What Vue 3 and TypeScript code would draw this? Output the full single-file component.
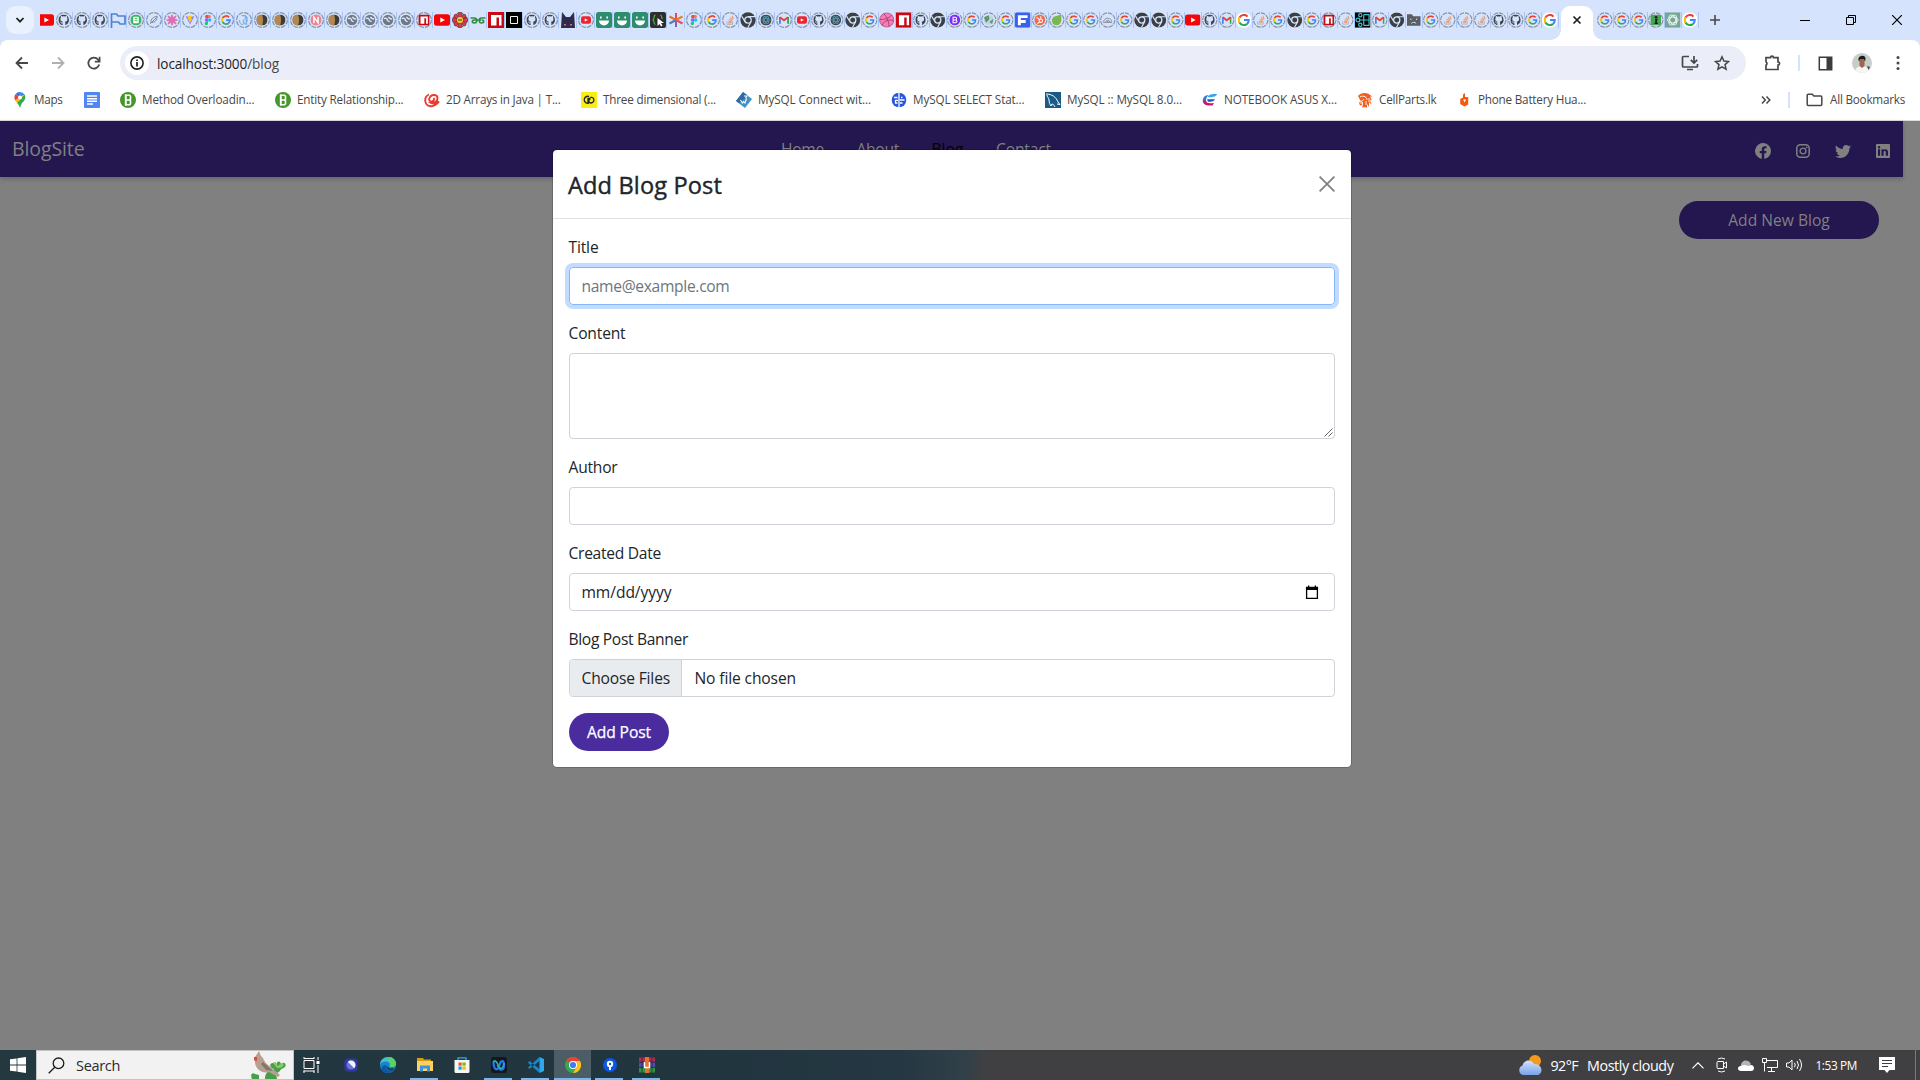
<script setup lang="ts">
interface Tab { icon: string; ring: boolean; pad: number; size: number }
interface Bookmark { icon: string; label: string; width: number; text: number }

// These icons fill most of their ring; the others keep a wider margin.
const bigInRing = ['gh', 'moon', 'globe', 'react', 'nred', 'npm', 'hub', 'flower', 'ever', 'boot', 'leaf', 'person', 'earth']

// A trailing "*" marks a suspended tab, whose icon is drawn inside a dashed ring.
const parse = (list: string): Tab[] =>
  list.trim().split(/\s+/).map((n) => {
    const icon = n.replace('*', '')
    const ring = n.endsWith('*')
    const pad = !ring ? 0 : bigInRing.includes(icon) ? 2.4 : 3
    return { icon, ring, pad, size: 16 - pad * 2 }
  })

const wideTabs = parse(`gh* gh* gh* flag ever* feather* flower* vite* figma* goog* doc* moon* moon* moon* nred* moon*
  globe* globe* globe* globe* npm* yt bloom gfg npm block gh* gh* cat ytr* smile smile smile cursor aster figma* goog*
  so* chrome react* gmail* ytr*`)
const slimTabs = parse(`gh* react* chrome goog* drib npm gh* chrome boot* goog* earth* goog* fblue hub* leaf* goog*
  goog* speed* goog* chrome chrome goog* yt gh* gmail* googw so* goog* chrome goog* npm* so* cyan gmail* chrome sad
  goog* so* so* so* gh* gh* goog* googw`)
const lastTabs = parse('goog* goog* goog* person* gpt googw')

const bookmarks: Bookmark[] = [
  { icon: 'maps', label: 'Maps', width: 52, text: 28.5 },
  { icon: 'docs', label: '', width: 16, text: 0 },
  { icon: 'bbc', label: 'Method Overloadin...', width: 135, text: 112.5 },
  { icon: 'bbc', label: 'Entity Relationship...', width: 129, text: 106.5 },
  { icon: 'edu', label: '2D Arrays in Java | T...', width: 137, text: 114.5 },
  { icon: 'cp', label: 'Three dimensional (...', width: 135, text: 113 },
  { icon: 'w3', label: 'MySQL Connect wit...', width: 135, text: 113 },
  { icon: 'g4', label: 'MySQL SELECT Stat...', width: 134, text: 111.5 },
  { icon: 'mysql', label: 'MySQL :: MySQL 8.0...', width: 137, text: 115 },
  { icon: 'cf', label: 'NOTEBOOK ASUS X...', width: 135, text: 113 },
  { icon: 'cell', label: 'CellParts.lk', width: 79, text: 57.5 },
  { icon: 'phone', label: 'Phone Battery Hua...', width: 135, text: 108 },
]

const apps = [
  { icon: 'orb', open: false, active: false },
  { icon: 'edge', open: false, active: false },
  { icon: 'explorer', open: true, active: false },
  { icon: 'store', open: false, active: false },
  { icon: 'webex', open: true, active: false },
  { icon: 'vscode', open: true, active: false },
  { icon: 'chromec', open: true, active: true },
  { icon: 'pin', open: true, active: false },
  { icon: 'rar', open: true, active: false },
]

// Spreads or tightens the letters so the text takes the given width in pixels.
const vFit = {
  mounted(el: HTMLElement, binding: { value: number }) {
    const n = (el.textContent ?? '').trim().length
    if (!n || !binding.value) return
    const natural = el.getBoundingClientRect().width
    el.style.letterSpacing = `${(binding.value - natural) / n}px`
  },
}
</script>

<template>
  <div class="screen">
    <svg class="defs" width="0" height="0" aria-hidden="true">
      <symbol id="i-gh" viewBox="0 0 16 16"><path fill="#3d444d" d="M8 0C3.58 0 0 3.58 0 8c0 3.54 2.29 6.53 5.47 7.59.4.07.55-.17.55-.38v-2.4c-2.01.4-2.6-.5-2.7-1-.1-.3-.5-1-.9-1.200-.3-.2-.7-.6 0-.6.6 0 1.100.6 1.200.8.7 1.200 1.900.9 2.300.7.1-.5.3-.9.5-1.100-1.800-.2-3.600-.9-3.600-3.900 0-.9.3-1.600.8-2.200-.1-.2-.4-1 .1-2.100 0 0 .7-.2 2.200.8a7.600 7.600 0 0 1 4 0c1.500-1 2.200-.8 2.200-.8.4 1.100.2 1.900.1 2.100.5.6.8 1.300.8 2.200 0 3.100-1.900 3.700-3.700 3.900.3.3.6.7.6 1.500v2.900c0 .2.1.5.5.4A8 8 0 0 0 8 0z"/></symbol>
      <symbol id="i-flag" viewBox="0 0 16 16"><path d="M1.500 16V2h5l1.500 2h7v8h-5L8.500 10h-7" fill="none" stroke="#4c82d6" stroke-width="1.700"/></symbol>
      <symbol id="i-ever" viewBox="0 0 16 16"><circle cx="8" cy="8" r="8" fill="#35b95e"/><rect x="4" y="3.500" width="8" height="9" rx="1" fill="#fff"/><path d="M6 6h4M6 8.500h4" stroke="#35b95e" stroke-width="1.300"/></symbol>
      <symbol id="i-feather" viewBox="0 0 16 16"><path d="M2 14 12 4M3 12C3 6 7 3 13 2c0 6-3 10-9 10z" fill="none" stroke="#76808f" stroke-width="1.500"/></symbol>
      <symbol id="i-flower" viewBox="0 0 16 16"><g stroke="#e36bb0" stroke-width="2.500"><path d="M8 0v16M0 8h16M2.300 2.300l11.400 11.400M13.700 2.300 2.300 13.700"/></g><circle cx="8" cy="8" r="5" fill="#dd6fb2"/></symbol>
      <symbol id="i-vite" viewBox="0 0 16 16"><path d="M1 2l7 13 7-13-7 1.200z" fill="#8f7bf5"/><path d="M11 1 4.500 2l-.5 6 2.300-.4L7 13l5-7-2 .2z" fill="#ffc61c"/></symbol>
      <symbol id="i-figma" viewBox="0 0 16 16"><path d="M8 0H5.500a2.700 2.700 0 0 0 0 5.300H8z" fill="#f24e1e"/><path d="M8 0h2.500a2.700 2.700 0 0 1 0 5.300H8z" fill="#ff7262"/><path d="M8 5.300H5.500a2.700 2.700 0 0 0 0 5.400H8z" fill="#a259ff"/><circle cx="10.600" cy="8" r="2.700" fill="#1abcfe"/><path d="M8 10.700H5.500A2.700 2.700 0 1 0 8 13.300z" fill="#0acf83"/></symbol>
      <symbol id="i-goog" viewBox="0 0 16 16"><g fill="none" stroke-width="2.800"><path d="M12.800 3.700A6.300 6.300 0 0 0 2.600 4.800" stroke="#ea4335"/><path d="M2.600 4.700a6.300 6.300 0 0 0 0 6.600" stroke="#fbbc05"/><path d="M2.600 11.200a6.300 6.300 0 0 0 9.400 2" stroke="#34a853"/><path d="M11.900 13.200C13.700 11.900 14.300 10 14.300 8H8.200" stroke="#4285f4"/></g></symbol>
      <symbol id="i-googw" viewBox="0 0 16 16"><circle cx="8" cy="8" r="8" fill="#fff"/><use href="#i-goog" x="1.500" y="1.500" width="13" height="13"/></symbol>
      <symbol id="i-doc" viewBox="0 0 16 16"><path d="M4 1h6l3 3v7M10 1v4h3M1 8a7 7 0 0 0 12 6M7 8h5v5H7z" fill="none" stroke="#78afe8" stroke-width="1.700"/></symbol>
      <symbol id="i-moon" viewBox="0 0 16 16"><circle cx="8" cy="8" r="8" fill="#3e3c3b"/><path d="M8 0a8 8 0 0 0 0 16c2-5 2-11 0-16z" fill="#b48750"/></symbol>
      <symbol id="i-nred" viewBox="0 0 16 16"><circle cx="8" cy="8" r="8" fill="#f0808d"/><path d="M5 12.500V4l6 8V3.500" fill="none" stroke="#fff" stroke-width="2"/></symbol>
      <symbol id="i-globe" viewBox="0 0 16 16"><circle cx="8" cy="8" r="7.500" fill="#6f7885"/><path d="M2 6c3-1 5 0 5 2s3 1 3 3M9 3.500c0 2 2 3 5 3" fill="none" stroke="#d5e3fd" stroke-width="2"/></symbol>
      <symbol id="i-npm" viewBox="0 0 16 16"><path d="M0 0h16v16H0z" fill="#c90813"/><path d="M3 3h10.500v10.500H11V5.500H8.500v8H3z" fill="#fff"/></symbol>
      <symbol id="i-yt" viewBox="0 0 16 16"><rect y="2.300" width="16" height="11.400" rx="2.500" fill="#f40606"/><path d="M6.300 5.500v5L11 8z" fill="#fff"/></symbol>
      <symbol id="i-ytr" viewBox="0 0 16 16"><rect y="2" width="16" height="12" rx="3.500" fill="#ec2430"/><path d="M6 5.500v5L11 8z" fill="#fff"/></symbol>
      <symbol id="i-bloom" viewBox="0 0 16 16"><g fill="#e33a45" stroke="#46151e" stroke-width=".6"><path d="M8 8 5.500 1 8 .3l2.500.7zM8 8l3.500-6 2 .8.700 2.400zM8 8l7-2.500.7 2.500-.7 2.500zM8 8l6.200 3.300-.7 2.200-2 .6zM8 8l2.500 7-2.500.7-2.500-.7zM8 8l-3.500 6.200-2-.7-.7-2.200zM8 8l-7 2.500L.3 8 1 5.500zM8 8 1.800 5l.7-2.300 2-.7z"/></g><circle cx="8" cy="8" r="3" fill="#f4d33a"/><path d="M6 8h4" stroke="#43221f"/></symbol>
      <symbol id="i-gfg" viewBox="0 0 16 16"><path d="M.5 6h4c3 0 3 5 0 5s-3-3 0-3h6.500M15.500 6h-4c-3 0-3 5 0 5s3-3 0-3" fill="none" stroke="#328a45" stroke-width="1.500"/></symbol>
      <symbol id="i-block" viewBox="0 0 16 16"><path d="M0 0h16v16H0z"/><path d="M4.500 4.500h7v7h-7z" fill="none" stroke="#f2f2f2"/></symbol>
      <symbol id="i-cat" viewBox="0 0 16 16"><path d="M1 16 2 0l4 5h4l4-5 1 16z" fill="#2f2b50"/><path d="M4 12h2v1.500H4zM10 12h2v1.500h-2z" fill="#c97b51"/></symbol>
      <symbol id="i-smile" viewBox="0 0 16 16"><rect width="16" height="16" rx="2.500" fill="#2e8d6d"/><path d="M4 4.500h1.600v2H4zM10.400 4.500H12v2h-1.600zM3 8.500h10a5 5 0 0 1-10 0z" fill="#fff"/></symbol>
      <symbol id="i-cursor" viewBox="0 0 16 16"><rect width="16" height="16" rx="2" fill="#2e2e2e"/><path d="M5.500 3C3 3 5 7 3 8c2 1 0 4 2.500 4.500M10 3c2.500 0 1 3 2.500 4" fill="none" stroke="#4cb54e" stroke-width="1.200"/><path d="M7.500 6v8l2-2 1.500 2.500 1.500-1L11 11h3z" fill="#fff"/></symbol>
      <symbol id="i-aster" viewBox="0 0 16 16"><g stroke-width="2"><path d="M8 1v7" stroke="#e34b44"/><path d="M8 8v7" stroke="#8d5ca9"/><path d="M1.500 4.500 8 8" stroke="#f06c35"/><path d="m8 8 6.500 3.500" stroke="#e0504d"/><path d="M14.500 4.500 8 8" stroke="#ee7a30"/><path d="m8 8-6.500 3.500" stroke="#4f77c5"/></g></symbol>
      <symbol id="i-so" viewBox="0 0 16 16"><path d="M3 10v5h9v-5" fill="none" stroke="#a9adb6" stroke-width="1.400"/><path d="M5 12.600h5.500M5.200 10l5.400 1M6.300 6.800l4.900 2.500M8.600 3.700l3.600 4.200M11.500 1.500l2 5" stroke="#f19a63" stroke-width="1.700"/></symbol>
      <symbol id="i-chrome" viewBox="0 0 16 16"><circle cx="8" cy="8" r="7.700" fill="#3c4043"/><circle cx="8" cy="8" r="3.200" fill="#3c4043" stroke="#d5e3fd" stroke-width="1.300"/><path d="M8 4.600h7M5 9.600 1.600 4M11 9.700l-3.300 6" stroke="#d5e3fd" stroke-width="1.200"/></symbol>
      <symbol id="i-react" viewBox="0 0 16 16"><circle cx="8" cy="8" r="8" fill="#3c4a55"/><g fill="none" stroke="#5ba8bd"><ellipse cx="8" cy="8" rx="6" ry="2.500"/><ellipse cx="8" cy="8" rx="6" ry="2.500" transform="rotate(60 8 8)"/><ellipse cx="8" cy="8" rx="6" ry="2.500" transform="rotate(120 8 8)"/></g></symbol>
      <symbol id="i-gmail" viewBox="0 0 16 16"><path d="M1.500 14V3" stroke="#4285f4" stroke-width="3"/><path d="M14.500 14V3" stroke="#34a853" stroke-width="3"/><path d="m1.500 3.500 6.500 5 6.500-5" fill="none" stroke="#ea4335" stroke-width="3"/></symbol>
      <symbol id="i-drib" viewBox="0 0 16 16"><circle cx="8" cy="8" r="7.300" fill="#f27fb5" stroke="#c4528d" stroke-width="1"/><path d="M5 1.500C9 6 10 10 10.500 15M1 7.500c5 0 9-1 12-4.500M3 13.500C6 8 10 7.500 15 8.500" fill="none" stroke="#b73b78"/></symbol>
      <symbol id="i-boot" viewBox="0 0 16 16"><circle cx="8" cy="8" r="8" fill="#7b2df5"/><path d="M5.500 4h3.200a1.900 1.900 0 0 1 0 3.900H5.500V4zm0 3.900h3.700a2 2 0 0 1 0 4.100H5.500z" fill="none" stroke="#fff" stroke-width="1.500"/></symbol>
      <symbol id="i-earth" viewBox="0 0 16 16"><circle cx="8" cy="8" r="7.500" fill="#c3d3e0"/><path d="M1 4 8 1l1 6-5 5zM9 11l6-5-2 8z" fill="#579a6d"/></symbol>
      <symbol id="i-fblue" viewBox="0 0 16 16"><rect width="16" height="16" rx="2" fill="#3a61ec"/><path d="M3 3h10v3H6v2h5v3H6v2.500H3z" fill="#fff"/></symbol>
      <symbol id="i-hub" viewBox="0 0 16 16"><circle cx="8" cy="8" r="8" fill="#f06a4b"/><circle cx="9.500" cy="9" r="2.500" fill="none" stroke="#fff" stroke-width="1.500"/><path d="M9.500 6V2.500M7.500 7.500 3.500 4M7.500 11l-3 2.500" stroke="#fff" stroke-width="1.500"/></symbol>
      <symbol id="i-leaf" viewBox="0 0 16 16"><path d="M14 0c2 8 1 15-6 16-6 0-9-6-6-11 2-3 8-3 12-5z" fill="#79b753"/></symbol>
      <symbol id="i-speed" viewBox="0 0 16 16"><path d="M1 12a7 7 0 0 1 14 0zM4.500 12a3.500 3.500 0 0 1 7 0" fill="none" stroke="#838c98" stroke-width="1.500"/><path d="M7 10h2v2H7z" fill="#d65f5f"/></symbol>
      <symbol id="i-sad" viewBox="0 0 16 16"><path d="M1 2h5l1.500 2H15v10H1z" fill="#5b5f63"/><path d="M5 6.500v1.500M11 6.500v1.500M5.500 11.500c1.500-1.500 3.500-1.500 5 0" fill="none" stroke="#d5e3fd"/></symbol>
      <symbol id="i-cyan" viewBox="0 0 16 16"><path d="M0 0h16v16H0z"/><g fill="none" stroke="#40c5d2" stroke-width="1.200"><circle cx="3" cy="8" r="2"/><circle cx="5.500" cy="3" r="1.700"/><circle cx="5.500" cy="13" r="1.700"/><path d="M9 2.500h6M9 8h6M9 13.500h6M9 2.500v11M14.500 2.500v11M5 8h4"/></g></symbol>
      <symbol id="i-person" viewBox="0 0 16 16"><rect width="16" height="16" rx="3" fill="#48a356"/><circle cx="8.500" cy="4" r="2" fill="#16241c"/><path d="M7 6.500h4L9.500 10l2 4h-6l2-3.500z" fill="#16241c"/></symbol>
      <symbol id="i-gpt" viewBox="0 0 16 16"><path d="M0 0h16v16H0z" fill="#76a796"/><g fill="none" stroke="#e8f2ee"><ellipse cx="8" cy="8" rx="5.500" ry="3"/><ellipse cx="8" cy="8" rx="5.500" ry="3" transform="rotate(60 8 8)"/><ellipse cx="8" cy="8" rx="5.500" ry="3" transform="rotate(120 8 8)"/></g></symbol>

      <symbol id="i-maps" viewBox="0 0 16 16"><path d="M8 0a5.600 5.600 0 0 0-4.300 2L8 5.600z" fill="#1a73e8"/><path d="M8 0a5.600 5.600 0 0 1 4.600 2.500L8 5.600 6.500 1z" fill="#4285f4"/><path d="M3.700 2A5.600 5.600 0 0 0 3.400 8.500L8 5.600z" fill="#ea4335"/><path d="M12.600 2.500 5 11 3.300 8.200 8 5z" fill="#fbbc04"/><path d="M12.600 2.500c2 4-.5 6.500-2.600 8.500-1 1.500-1.200 3-2 5-.8-2-1.200-3.500-3-5z" fill="#34a853"/><circle cx="8" cy="5.600" r="2" fill="#fff"/></symbol>
      <symbol id="i-docs" viewBox="0 0 16 16"><rect width="16" height="16" rx="1" fill="#4f86f3"/><path d="M3 4h10M3 6.700h10M3 9.300h10M3 12h6" stroke="#fff" stroke-width="1.400"/></symbol>
      <symbol id="i-bbc" viewBox="0 0 16 16"><circle cx="8" cy="8" r="8" fill="#45962b"/><path d="M5.700 3.200h4l.8 1v2.900l-.8.900.8.900v2.900l-.8 1h-4zM5.700 8h4" fill="none" stroke="#fff" stroke-width="1.600"/><path d="M5.700 2.500v11" stroke="#fff" stroke-width="1.600"/></symbol>
      <symbol id="i-edu" viewBox="0 0 16 16"><path d="M5 2.500C-.5 5 0 13.500 6.500 14.200c4 .3 6.500-2 8.500-4.700-3 2.500-6.500 2.500-8 1.500 4 0 6.500-2 6.500-5 0-3.500-5.500-4-7.500-1s0 5 2 4.500 2.500-2.500 1.500-3.500" fill="none" stroke="#e93b31" stroke-width="1.900"/></symbol>
      <symbol id="i-cp" viewBox="0 0 16 16"><path d="M0 0h16v16H0z" fill="#f8ee16"/><path d="M8 4.500a3.500 3.500 0 1 0 0 6.500M7 12V6.500h2M9 5.500c5-1.500 5 5.500 1 5.500-3 0-2.500-4-.5-4" fill="none" stroke="#20242b" stroke-width="1.300"/></symbol>
      <symbol id="i-w3" viewBox="0 0 16 16"><path d="M7 0 16 7l-7 9-9-7z" fill="#3f93c8"/><path d="M7 0 0 9l3 2.300L12 3.800z" fill="#3169a4"/><path d="m4.500 8 2 3 1-1.500L9 11l1.500-4.500M8 4h3l-1.500 2" fill="none" stroke="#fff" stroke-width="1.100"/></symbol>
      <symbol id="i-g4" viewBox="0 0 16 16"><circle cx="8" cy="8" r="7.300" fill="#2855e0"/><path d="M8 0v16M4.500 8.300H7M9 8h4.500M11.500 5.500H10M3 5.500h3.500M4.500 8v3h2M9 11h2.500" fill="none" stroke="#fff" stroke-width="1.300"/></symbol>
      <symbol id="i-mysql" viewBox="0 0 16 16"><path d="M0 0h16v16H0z" fill="#195b86"/><path d="M1 2c6 0 10 3 12 8l2 2.500-3-.5M2 3c0 2 2 3 2 5s1 5 2 6l1-2c2 0 2 2 3 3" fill="none" stroke="#fff"/></symbol>
      <symbol id="i-cf" viewBox="0 0 16 16"><path d="M5.500 5C7 2.300 10 2 15 2c-.8 2.600-3 3-8 3.300z" fill="#2da7ef"/><path d="M5 7.200h8c-.8 2-3 2.600-7 2.600z" fill="#2553c0"/><path d="M6.500 3C2 3.500.8 6 .8 9h3.200c0-2.500.8-4.500 2.500-6z" fill="#2f7fdc"/><path d="M.8 8.500C1 12.500 4 14 10.500 13.500l1.500-2.500C7 11.500 4.500 11.500 4 8.500z" fill="#c61a68"/></symbol>
      <symbol id="i-cell" viewBox="0 0 16 16"><path d="M1 4C4 0 12 0 15 5l-2-.5 2 4-2-1 1.500 5L12 10v5l-2-3v4l-2-1-3 .5 1-3-3 1-1-3 2-1z" fill="#ee611f"/><path d="M3 5c4-2 7 0 7 3M7 7c-1 2-2 2-3 2v3M9 9v4M12 6v4M5.500 10v3" fill="none" stroke="#fff" stroke-width=".9"/></symbol>
      <symbol id="i-phone" viewBox="0 0 16 16"><path d="M9 1v4h3.200v7.500L8.500 14.500 4.200 12V7L7 5.500V2.500z" fill="#f45a0c"/><path d="M7.200 7.500h3L8.500 10.500z" fill="#fff"/></symbol>

      <symbol id="i-orb" viewBox="0 0 16 16"><rect x="1.500" y="1.500" width="13" height="13" rx="3.500" fill="#3038a6"/><circle cx="8" cy="8" r="4.500" fill="#6a73d6"/><path d="M4.800 4.800a4.500 4.500 0 0 1 6.400 6.400z" fill="#f4f5ff"/></symbol>
      <symbol id="i-edge" viewBox="0 0 16 16"><circle cx="8" cy="8" r="8" fill="#1485d3"/><path d="M0 8C0 3 4 0 8 0c5 0 8 3.500 8 7 0 3-5 4-6.500 2 1.500-2-1-5-4-4.500C2.500 4.500.5 6 0 8z" fill="#45c3c0"/><path d="M9 .1C14 .5 16 4 16 7c0 3-5 4-6.500 2 1.500-2 .5-3.500-.5-4z" fill="#5ad465"/><path d="M6 8c-1 4 2 7 7 5.500C10 17 4 16.500 2 13c-1-3 1-5 4-5z" fill="#0f54a5"/><path d="M7 7.500c-.5 3 3 5 7.500 3.500l-1.500 2.500C8 14 5.500 11 7 7.500z" fill="#22363f"/></symbol>
      <symbol id="i-explorer" viewBox="0 0 16 16"><path d="M0 1h6l1 1.500h7V6H0z" fill="#d99a18"/><path d="M0 4h16v10H0z" fill="#fdd263"/><path d="M3 14.500V8.500h10v6h-3v-3H6v3z" fill="#3a93db"/></symbol>
      <symbol id="i-store" viewBox="0 0 16 16"><path d="M4 4V.8h8V4" fill="none" stroke="#35a6e8" stroke-width="1.300"/><path d="M.5 3h15v11.500a1.500 1.500 0 0 1-1.500 1.500H2a1.500 1.500 0 0 1-1.500-1.500z" fill="#f5f5f5"/><path d="M4.500 5.500h3.200v3.200H4.500z" fill="#f25022"/><path d="M8.500 5.500h3.200v3.200H8.500z" fill="#7fba00"/><path d="M4.500 9.500h3.200v3.200H4.500z" fill="#00a4ef"/><path d="M8.500 9.500h3.200v3.200H8.500z" fill="#ffb900"/></symbol>
      <symbol id="i-webex" viewBox="0 0 16 16"><rect width="16" height="16" rx="3" fill="#15171a"/><path d="M2.500 4.500C2.500 14 7 14 8.300 8.500s4.700-6 4.700-.5-4 7-6.500 0" fill="none" stroke="#2278ee" stroke-width="2.300"/><path d="M2.500 5.500c.5-3 3-2 4.500 2.500s5 5 6-2" fill="none" stroke="#25b5a6" stroke-width="1.600"/></symbol>
      <symbol id="i-vscode" viewBox="0 0 16 16"><path d="M0 5.500 1.500 4 11.500 12v4L1 6.800zM0 10.500 1.500 12 11.500 4V0z" fill="#1687cd"/><path d="M11.500 0 16 2v12l-4.500 2z" fill="#2fa8ee"/></symbol>
      <symbol id="i-chromec" viewBox="0 0 16 16"><circle cx="8" cy="8" r="8" fill="#34a853"/><path d="M8 8 1.100 4A8 8 0 0 1 15 4z" fill="#ea4335"/><path d="M8 4h7a8 8 0 0 1-7 12l3.500-6z" fill="#fbc116"/><circle cx="8" cy="8" r="4" fill="#fff"/><circle cx="8" cy="8" r="3.100" fill="#3f7ef0"/></symbol>
      <symbol id="i-pin" viewBox="0 0 16 16"><circle cx="8" cy="8" r="7" fill="#0b57e3"/><circle cx="8" cy="7" r="3.200" fill="#fff"/><path d="M7 9h2v4H7z" fill="#fff"/><circle cx="8" cy="7" r="1.200" fill="#0b57e3"/></symbol>
      <symbol id="i-rar" viewBox="0 0 16 16"><path d="M0 .5h16v5H0z" fill="#b62a58"/><path d="M0 5.500h16v5H0z" fill="#4a51b4"/><path d="M0 10.500h16v5H0z" fill="#2f9440"/><path d="M0 5.200h16M0 10.400h16M3 .5v15M13 .5v15" stroke="#26242c" stroke-width=".7"/><path d="M6 0h4v16H6z" fill="#e1742f"/><path d="M5.500 5v5.500h5V5" fill="none" stroke="#fff" stroke-width="1.400"/></symbol>
    </svg>

    <header class="tabs">
      <button class="tab-search"><svg width="10" height="10" viewBox="0 0 10 10"><path d="m1.500 3 3.500 3.700L8.500 3" fill="none" stroke="#1f1f1f" stroke-width="1.800"/></svg></button>
      <div class="tab first"><svg width="16" height="16" viewBox="0 0 16 16"><use href="#i-yt" width="16" height="16"/></svg></div>
      <div v-for="(t, i) in wideTabs" :key="'w' + i" class="tab">
        <svg width="16" height="16" viewBox="0 0 16 16">
          <circle v-if="t.ring" cx="8" cy="8" r="7.400" class="ring"/>
          <use :href="'#i-' + t.icon" :x="t.pad" :y="t.pad" :width="t.size" :height="t.size"/>
        </svg>
      </div>
      <div v-for="(t, i) in slimTabs" :key="'s' + i" class="tab slim">
        <svg width="15.500" height="16" viewBox="0 0 16 16">
          <circle v-if="t.ring" cx="8" cy="8" r="7.400" class="ring"/>
          <use :href="'#i-' + t.icon" :x="t.pad" :y="t.pad" :width="t.size" :height="t.size"/>
        </svg>
      </div>
      <div class="active-tab"><svg width="10" height="10" viewBox="0 0 10 10"><path d="m1.500 1.500 7 7m0-7-7 7" stroke="#1f1f1f" stroke-width="1.700"/></svg></div>
      <div v-for="(t, i) in lastTabs" :key="'l' + i" class="tab slim">
        <svg width="15.500" height="16" viewBox="0 0 16 16">
          <circle v-if="t.ring" cx="8" cy="8" r="7.400" class="ring"/>
          <use :href="'#i-' + t.icon" :x="t.pad" :y="t.pad" :width="t.size" :height="t.size"/>
        </svg>
      </div>
      <svg class="plus" width="12" height="12" viewBox="0 0 12 12"><path d="M6 1v10M1 6h10" stroke="#474747" stroke-width="1.600"/></svg>
      <div class="window-buttons">
        <svg width="10" height="10" viewBox="0 0 10 10"><path d="M0 5.500h10" stroke="#000"/></svg>
        <svg width="10" height="10" viewBox="0 0 10 10"><path d="M.5 2.500h7v7h-7zM2.500 2.500v-2h7v7h-2" fill="none" stroke="#000"/></svg>
        <svg width="10" height="10" viewBox="0 0 10 10"><path d="m0 0 10 10M10 0 0 10" stroke="#000" stroke-width="1.200"/></svg>
      </div>
    </header>

    <div class="chrome">
      <div class="toolbar">
        <svg class="nav-icon" viewBox="0 0 16 16"><path d="M14 8H3M8 2.500 2.500 8 8 13.500" fill="none" stroke="#474747" stroke-width="1.800"/></svg>
        <svg class="nav-icon" viewBox="0 0 16 16"><path d="M2 8h11M8 2.500 13.500 8 8 13.500" fill="none" stroke="#b0b0b0" stroke-width="1.800"/></svg>
        <svg class="nav-icon" viewBox="0 0 16 16"><path d="M13.200 9.500a5.500 5.500 0 1 1-1-4.800L13.500 6.200M13.600 1.800v4.800H8.800" fill="none" stroke="#474747" stroke-width="1.700"/></svg>
        <div class="omnibox">
          <span class="info"><svg width="16" height="16" viewBox="0 0 16 16"><circle cx="8" cy="8" r="6.100" fill="none" stroke="#1f1f1f" stroke-width="1.600"/><path d="M8 7v4.500M8 4.500v1.600" stroke="#1f1f1f" stroke-width="1.700"/></svg></span>
          <span v-fit="122" class="url">localhost:3000<i>/blog</i></span>
          <svg class="install" width="18" height="16" viewBox="0 0 18 16"><path d="M8 1.500H2.500a1 1 0 0 0-1 1v8.500a1 1 0 0 0 1 1h13a1 1 0 0 0 1-1V9M13 1v6.500M9.800 4.800 13 8l3.200-3.200M6 14.500h6" fill="none" stroke="#474747" stroke-width="1.700"/></svg>
          <svg width="16" height="16" viewBox="0 0 16 16"><path d="m8 1.800 1.900 4.300 4.600.4-3.500 3.100 1.100 4.600L8 11.800l-4.100 2.400L5 9.600 1.500 6.500l4.600-.4z" fill="none" stroke="#474747" stroke-width="1.500"/></svg>
        </div>
        <svg class="ext" width="18" height="18" viewBox="0 0 18 18"><path d="M2 3.700h4.500a1.500 1.500 0 0 1 3 0H14v4.300a1.500 1.500 0 0 1 0 3.200v4.300H2v-4.200a2 2 0 0 0 0-3.400z" fill="none" stroke="#474747" stroke-width="1.700"/></svg>
        <span class="bar"/>
        <svg class="panel" width="15" height="15" viewBox="0 0 15 15"><path d="M1.300 1.300h12.400v12.400H1.300z" fill="none" stroke="#3c3c3c" stroke-width="1.500"/><path d="M8.500 1h5.500v13H8.500z" fill="#3c3c3c"/></svg>
        <svg class="avatar" width="20" height="20" viewBox="0 0 20 20"><defs><clipPath id="av"><circle cx="10" cy="10" r="10"/></clipPath></defs><g clip-path="url(#av)"><path d="M0 0h20v20H0z" fill="#c9cdc9"/><path d="M3 20c0-5 3-7 7-7s7 2 7 7z" fill="#f5f5f5"/><path d="M7.500 7h5v6L10 15l-2.500-2z" fill="#9b6849"/><path d="M6.500 7c-1-5 7.500-6 7-1l-.5 2.500-1-2H8L7 8.500z" fill="#1b1d1f"/><path d="m15 13 3 1-1.500 3z" fill="#424b50"/></g></svg>
        <svg class="dots" width="4" height="16" viewBox="0 0 4 16"><circle cx="2" cy="2.500" r="1.500"/><circle cx="2" cy="8" r="1.500"/><circle cx="2" cy="13.500" r="1.500"/></svg>
      </div>
      <div class="bookmarks">
        <div v-for="b in bookmarks" :key="b.label" class="bookmark" :style="{ width: b.width + 'px' }">
          <svg width="16" height="16" viewBox="0 0 16 16"><use :href="'#i-' + b.icon" width="16" height="16"/></svg>
          <span v-if="b.label" v-fit="b.text" class="lift">{{ b.label }}</span>
        </div>
        <svg class="more" width="10" height="10" viewBox="0 0 10 10"><path d="m1 1.500 3.300 3.500L1 8.500M5.500 1.500 8.800 5 5.500 8.500" fill="none" stroke="#474747" stroke-width="1.500"/></svg>
        <span class="bar"/>
        <svg class="folder" width="17" height="14" viewBox="0 0 17 14"><path d="M1.200 2.200a1 1 0 0 1 1-1h4l1.700 1.900h6.900a1 1 0 0 1 1 1v7.500a1 1 0 0 1-1 1H2.200a1 1 0 0 1-1-1z" fill="none" stroke="#474747" stroke-width="1.500"/></svg>
        <span v-fit="75" class="lift">All Bookmarks</span>
      </div>
    </div>

    <main class="page">
      <nav class="navbar">
        <span v-fit="72.500" class="brand lift">BlogSite</span>
        <div class="links">
          <a><span v-fit="43">Home</span></a>
          <a><span v-fit="42.500">About</span></a>
          <a class="current"><span v-fit="32">Blog</span></a>
          <a><span v-fit="55">Contact</span></a>
        </div>
        <div class="social">
          <svg viewBox="0 0 16 16"><path d="M16 8a8 8 0 1 0-9.250 7.900V10.300H4.700V8h2.050V6.250c0-2 1.200-3.100 3-3.100.9 0 1.800.15 1.800.15v2h-1c-1 0-1.300.6-1.300 1.250V8h2.200l-.35 2.300H9.250v5.600A8 8 0 0 0 16 8z"/></svg>
          <svg viewBox="0 0 16 16"><rect x="1.800" y="1.800" width="12.400" height="12.400" rx="3.500" fill="none" stroke="#808080" stroke-width="1.500"/><circle cx="8" cy="8" r="2.900" fill="none" stroke="#808080" stroke-width="1.400"/><circle cx="11.700" cy="4.300" r=".9"/></svg>
          <svg viewBox="0 0 16 16"><path d="M5.030 15c6.040 0 9.340-5 9.340-9.330v-.43A6.600 6.600 0 0 0 16 3.540a6.500 6.500 0 0 1-1.880.52 3.300 3.300 0 0 0 1.440-1.810 6.500 6.500 0 0 1-2.090.79 3.280 3.280 0 0 0-5.600 2.990A9.300 9.300 0 0 1 1.110 2.600a3.300 3.300 0 0 0 1.020 4.380 3.300 3.300 0 0 1-1.490-.41v.04a3.300 3.300 0 0 0 2.630 3.220 3.300 3.300 0 0 1-1.480.06 3.300 3.300 0 0 0 3.070 2.280A6.600 6.600 0 0 1 0 13.530 9.300 9.300 0 0 0 5.030 15"/></svg>
          <svg viewBox="0 0 16 16"><path fill-rule="evenodd" d="M1.800 1h12.400a.8.8 0 0 1 .8.800v12.400a.8.800 0 0 1-.8.800H1.800a.8.800 0 0 1-.8-.8V1.800a.8.800 0 0 1 .8-.8zM3 6.200v6.600h2.100V6.200zM4.050 3a1.200 1.200 0 1 0 0 2.400 1.200 1.200 0 0 0 0-2.400zM6.500 6.200v6.600h2.100V9.500c0-1.900 2.200-1.900 2.200 0v3.300h2.200V9c0-3.100-3.300-3.700-4.400-1.700V6.200z"/></svg>
        </div>
      </nav>
      <div class="actions"><button class="new-blog"><span v-fit="101.500">Add New Blog</span></button></div>

      <section class="modal">
        <div class="modal-head">
          <h4><span v-fit="154">Add Blog Post</span></h4>
          <svg width="16" height="16" viewBox="0 0 16 16"><path d="m.6.6 14.800 14.800M15.400.6.6 15.400" stroke="#7f7f7f" stroke-width="1.700"/></svg>
        </div>
        <form class="modal-body" @submit.prevent>
          <label><span v-fit="30">Title</span></label>
          <div class="field focused"><span v-fit="148" class="hint">name@example.com</span></div>
          <label><span v-fit="57">Content</span></label>
          <div class="field area"><svg width="9" height="9" viewBox="0 0 9 9"><path d="M.5 8.500l8-8M4.500 8.500l4-4" stroke="#555" stroke-width=".9"/></svg></div>
          <label><span v-fit="49">Author</span></label>
          <div class="field"/>
          <label><span v-fit="92.500">Created Date</span></label>
          <div class="field date"><span v-fit="90">mm/dd/yyyy</span><svg width="14" height="15" viewBox="0 0 14 15"><path d="M1.600 2.500h10.800v10.800H1.600z" fill="none" stroke="#000" stroke-width="1.300"/><path d="M1 2h12v3H1zM3 .5h1.300V2H3zM9.700.5H11V2H9.700z"/></svg></div>
          <label><span v-fit="119.500">Blog Post Banner</span></label>
          <div class="field file"><span class="choose"><span v-fit="88.500">Choose Files</span></span><span v-fit="101.500">No file chosen</span></div>
          <button class="submit"><span v-fit="64">Add Post</span></button>
        </form>
      </section>
    </main>

    <footer class="taskbar">
      <div class="start"><svg width="16" height="16" viewBox="0 0 16 16"><path d="M0 2.300 6.600 1.400v6.200H0zM7.400 1.300 16 0v7.600H7.400zM0 8.400h6.600v6.200L0 13.700zM7.400 8.400H16V16l-8.600-1.300z" fill="#fff"/></svg></div>
      <div class="search">
        <svg width="17" height="17" viewBox="0 0 17 17"><circle cx="10.500" cy="6.300" r="5.300" fill="none" stroke="#1d1d1d" stroke-width="1.300"/><path d="m6.700 10.300-6 6" stroke="#1d1d1d" stroke-width="1.300"/></svg>
        <span v-fit="44">Search</span>
        <svg class="bird" width="35" height="28" viewBox="0 0 35 28"><path d="M1 28c-2-4 0-7 3-5l4 1v4zM14 28c0-5 2-9 8-7l1-3c-4-1-5-5-2-6 3 0 3 2 5 2-1-4 3-5 4-1 3-3 6 0 4 3-2 2-4 1-5 4l-4 3 1 5z" fill="#46a049"/><path d="M22 12c2-2 4-1 4 3l6-3c2 4-2 5-6 5z" fill="#8dca63"/><path d="M8 0l2 5c3 2 3 6 6 8l13 11-2 2-9-5c-8 2-14-4-14-10V6z" fill="#b4a192"/><path d="m12 11 10 9-7-1-5-6z" fill="#8a7468"/><path d="M3 6h3v4l-3-.5z" fill="#e44a32"/></svg>
      </div>
      <div class="task-view"><svg width="17" height="16" viewBox="0 0 17 16"><path d="M1 3.500h10v8H1zM1 1v-1M11 1v-1M1 13.500V16M11 13.500V16M.5 1.500h11M.5 14h11M15 0v3M15 8v8" fill="none" stroke="#fff"/><path d="M13.500 4h3v3h-3z" fill="#fff"/></svg></div>
      <div v-for="a in apps" :key="a.icon" class="app" :class="{ open: a.open, active: a.active }"><svg width="16" height="16" viewBox="0 0 16 16"><use :href="'#i-' + a.icon" width="16" height="16"/></svg></div>
      <div class="tray">
        <svg class="weather" width="25" height="20" viewBox="0 0 25 20"><defs><linearGradient id="cl" x2="0" y2="1"><stop stop-color="#d5e2fc"/><stop offset="1" stop-color="#79a3ea"/></linearGradient></defs><circle cx="17" cy="6" r="6" fill="#f39a1c"/><path d="M5 20a5 5 0 0 1-.500-9.500C6 4 14 4 16 9c8-1 10 9 4 11z" fill="url(#cl)"/></svg>
        <span v-fit="27.500" class="temp">92°F</span>
        <span v-fit="86.500" class="sky">Mostly cloudy</span>
        <svg class="caret" width="12" height="7" viewBox="0 0 12 7"><path d="m.5 6.300 5.500-5.500 5.500 5.500" fill="none" stroke="#fff" stroke-width="1.200"/></svg>
        <svg class="cam" width="12" height="16" viewBox="0 0 12 16"><path d="M2 4.500h5.500v7H2a1 1 0 0 1-1-1v-5a1 1 0 0 1 1-1zM7.500 7l3-2v6l-3-2M2 2q3.500-2 7 0M2 14q3.500 2 7 0" fill="none" stroke="#fff"/></svg>
        <svg class="drive" width="16" height="11" viewBox="0 0 16 11"><path d="M3 7C2 3 6-1 10 1c2 1 2 2 3 3L9 8z" fill="#b5b5b5"/><path d="M3 11C-1 11-1 6 3 6l3-1 5 1c1-2 5-1 5 2 0 2-1 3-3 3z" fill="#fff"/></svg>
        <svg class="net" width="16" height="14" viewBox="0 0 16 14"><path d="M4.500 2.500h11v7H5M9.500 9.500v4M6 13.500h7M.5.500h4v4h-4zM2.500 4.500v9" fill="none" stroke="#fff"/></svg>
        <svg class="vol" width="17" height="14" viewBox="0 0 17 14"><path d="M.5 5v4h2.500l3 3V2L3 5zM8.500 4.800q1.500 2.200 0 4.400M11 3q3 4 0 8M13.500 1q4 6 0 12" fill="none" stroke="#fff"/></svg>
        <span v-fit="41.500" class="clock">1:53 PM</span>
        <svg class="note" width="16" height="16" viewBox="0 0 16 16"><path d="M0 0h16v13h-5.500L8 16l-2.500-3H0z" fill="#fff"/><path d="M3 3.500h10M3 6.500h10M3 9.500h6" stroke="#404042"/></svg>
        <span class="peek"/>
      </div>
    </footer>
  </div>
</template>

<style>
body { margin: 0; overflow: hidden; }
</style>

<style scoped>
.screen { width: 1920px; height: 1080px; display: flex; flex-direction: column; background: #d5e3fd; font-family: 'Open Sans', 'Noto Sans', sans-serif; overflow: hidden; }
.screen * { box-sizing: border-box; }
.defs { position: absolute; }
svg { display: block; flex: none; }
span { white-space: nowrap; }
button { border: 0; font: inherit; padding: 0; }
.lift { padding-bottom: 1.500px; }

.tabs { height: 40px; display: flex; align-items: center; flex: none; }
.tab-search { width: 28px; height: 28px; margin-left: 6px; border-radius: 9px; background: #e9f0fe; display: flex; align-items: center; justify-content: center; }
.tab { width: 18px; height: 16px; border-right: 1.500px solid #a9c6fa; display: flex; justify-content: center; flex: none; margin-right: 0; }
.tab.first { width: 15px; margin-left: 6px; overflow: hidden; justify-content: flex-end; border: 0; padding-right: 1px; }
.tab.slim { width: 17px; }
.ring { fill: none; stroke: #8791a3; stroke-width: 1.200; stroke-dasharray: 4.800 1; }
.active-tab { position: relative; width: 32px; height: 34px; margin: 6px 4px 0 2px; background: #fff; border-radius: 9px 9px 0 0; display: flex; align-items: center; justify-content: center; padding-bottom: 6px; }
.active-tab::before, .active-tab::after { content: ''; position: absolute; bottom: 0; width: 10px; height: 10px; }
.active-tab::before { left: -10px; background: radial-gradient(circle at 0 0, transparent 9.500px, #fff 10px); }
.active-tab::after { right: -10px; background: radial-gradient(circle at 100% 0, transparent 9.500px, #fff 10px); }
.plus { margin-left: 10px; }
.window-buttons { margin: 0 18px 0 auto; display: flex; gap: 36px; }

.chrome { height: 81px; flex: none; background: #fff; border-radius: 8px 8px 0 0; border-bottom: 1px solid #dcdcdc; }
.toolbar { height: 46px; display: flex; align-items: center; padding-left: 14px; }
.nav-icon { width: 16px; height: 16px; margin-right: 20px; }
.omnibox { width: 1626px; height: 34px; margin-left: -2px; border-radius: 17px; background: #ebeef8; display: flex; align-items: center; padding: 0 16px 0 5px; }
.info { width: 24px; height: 24px; border-radius: 50%; background: #fff; display: flex; align-items: center; justify-content: center; margin-right: 8px; }
.url { font-size: 13.600px; color: #1f1f1f; }
.url i { font-style: normal; color: #474747; }
.install { margin-left: auto; margin-right: 15px; }
.ext { margin-left: 18px; }
.bar { width: 2px; height: 16px; background: #d3e2fd; }
.toolbar .bar { margin-left: 16px; }
.panel { margin-left: 18px; }
.avatar { margin-left: 19px; }
.dots { margin-left: 24px; fill: #474747; }

.bookmarks { height: 28px; display: flex; align-items: center; padding-left: 12px; font-size: 11.700px; color: #474747; }
.bookmark { display: flex; align-items: center; gap: 6px; margin-right: 20px; flex: none; }
.bookmark svg { flex: none; }
.more { margin-left: 150px; }
.bookmarks .bar { margin-left: 17px; }
.folder { margin: 0 7px 0 16px; }

.page { height: 929px; flex: none; background: #808080; position: relative; }
.navbar { width: 1903px; height: 56px; background: #24164f; box-shadow: 0 2px 5px rgba(0, 0, 0, .2); display: flex; align-items: center; justify-content: space-between; padding: 0 12px; color: #808080; position: relative; }
.brand { font-size: 19.500px; }
.links { position: absolute; left: 781px; display: flex; gap: 32.500px; font-size: 15.600px; }
.current { color: #000; }
.social { display: flex; gap: 24px; fill: #808080; padding-top: 3px; }
.social svg { width: 16px; height: 16px; }
.actions { width: 1903px; display: flex; justify-content: flex-end; padding: 24px 24px 0 0; }
.new-blog { width: 200px; height: 38px; border-radius: 20px; background: #24164f; color: #808080; font-size: 15.600px; }

.modal { position: absolute; left: 552px; top: 28px; width: 800px; height: 619px; background: #fff; background-clip: padding-box; border: 1px solid rgba(0, 0, 0, .175); border-radius: 5px; color: #212529; font-size: 15.600px; line-height: 24px; }
.modal-head { height: 69px; padding: 0 16px 0 15px; border-bottom: 1px solid #dee2e6; display: flex; align-items: center; justify-content: space-between; }
h4 { margin: 0; padding-top: 2px; font-size: 23.600px; font-weight: 500; line-height: 36px; -webkit-text-stroke: .4px #212529; }
.modal-body { padding: 16px; display: flex; flex-direction: column; }
label { height: 24px; margin: 0 0 8px -.5px; }
.field { height: 38px; margin-bottom: 16px; border: 1px solid #ced4da; border-radius: 4px; padding: 0 11.500px; display: flex; align-items: center; flex: none; }
.focused { border-color: #86b7fe; box-shadow: 0 0 0 4px rgba(13, 110, 253, .25); }
.hint { color: #6c757d; }
.area { height: 86px; align-items: flex-end; justify-content: flex-end; padding: 1px; }
.date { justify-content: space-between; padding-right: 15px; }
.file { padding-left: 0; }
.choose { width: 112px; height: 36px; padding-left: 11.500px; margin-right: 12.500px; background: #e9ecef; border-right: 1px solid #ced4da; border-radius: 3px 0 0 3px; display: flex; align-items: center; }
.submit { width: 100px; height: 38px; border-radius: 20px; background: #4a2c9f; color: #fff; -webkit-text-stroke: .25px #fff; }

.taskbar { height: 30px; flex: none; display: flex; align-items: center; background: linear-gradient(90deg, #243840 0, #21353f 700px, #243742 900px, #314049 965px, #404042 985px, #404042 100%); color: #fff; }
.start { width: 36px; display: flex; justify-content: center; }
.search { width: 258px; height: 30px; background: #f2f2f2; border: 1px solid #c4c4c4; display: flex; align-items: center; padding-left: 11px; color: #2a2a2a; font-size: 14.500px; gap: 11px; }
.bird { margin: 0 7px 0 auto; }
.task-view { width: 38px; display: flex; justify-content: center; padding-right: 3px; }
.app { width: 37px; height: 30px; display: flex; align-items: center; justify-content: center; position: relative; flex: none; }
.app.open::after { content: ''; position: absolute; bottom: 0; left: 4px; right: 5px; height: 2px; background: #76b9ed; }
.app.active { background: #4d5d65; }
.app.active::after { left: 0; right: 0; }
.tray { margin-left: auto; display: flex; align-items: center; height: 30px; font-size: 14.300px; }
.temp { margin-left: 8px; }
.sky { margin-left: 9px; }
.caret { margin-left: 18px; }
.cam { margin-left: 12px; }
.drive { margin-left: 10px; }
.net { margin-left: 8px; }
.vol { margin-left: 8px; }
.clock { margin-left: 13px; font-size: 11.800px; padding-bottom: 1px; }
.note { margin-left: 22px; }
.peek { width: 1px; height: 30px; background: #7a7a7a; margin: 0 4px 0 20px; }
</style>
